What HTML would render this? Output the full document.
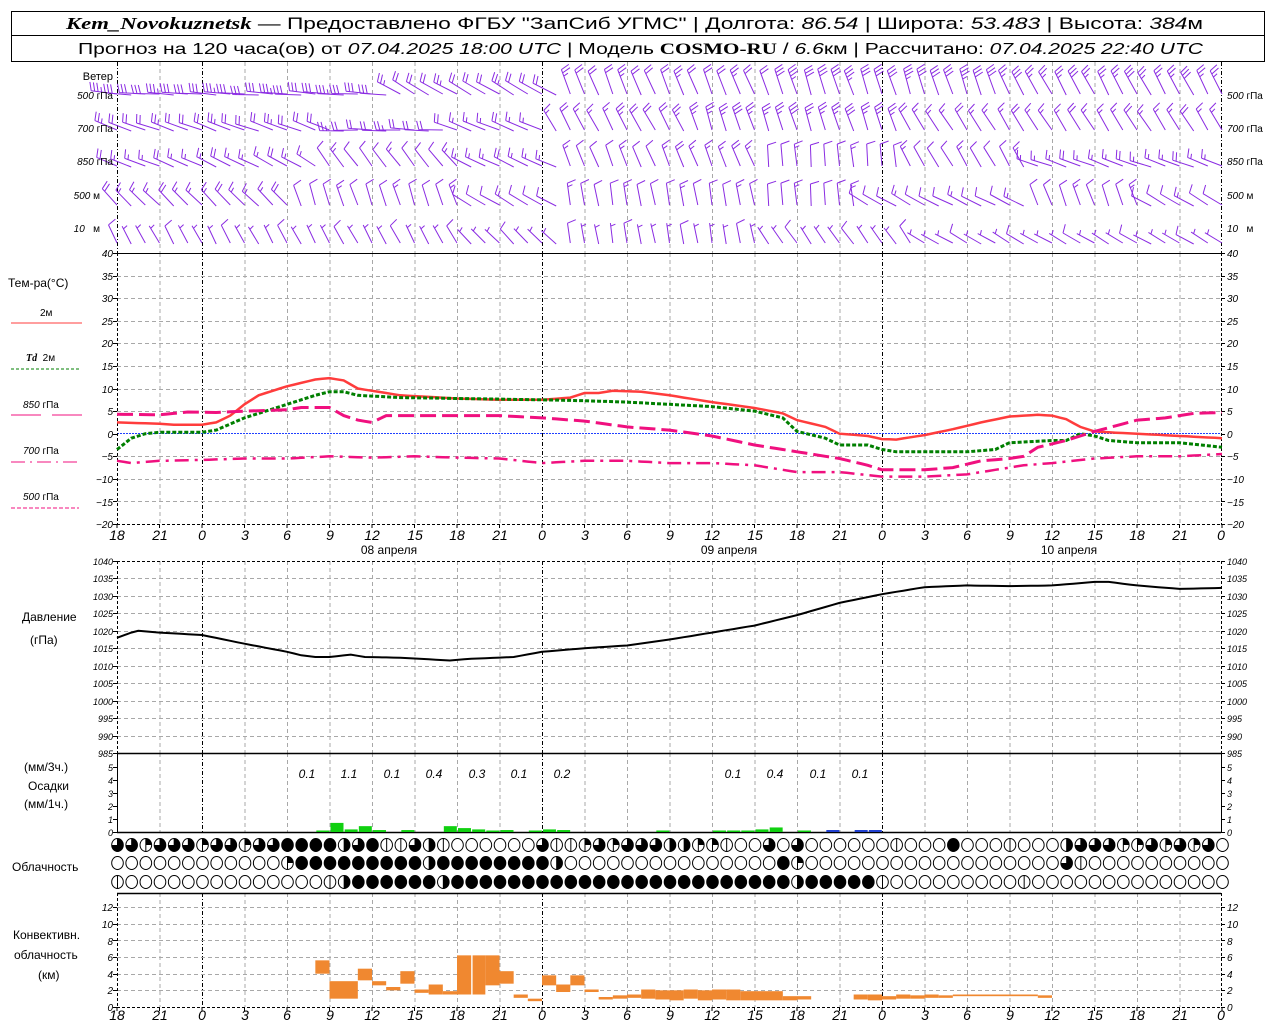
<!DOCTYPE html>
<html><head><meta charset="utf-8"><style>
html,body{margin:0;padding:0;background:#fff;width:1280px;height:1024px;overflow:hidden}
svg{display:block}
text{font-family:"Liberation Sans",sans-serif;fill:#000}
.tk{font-size:10px;font-style:italic}
.hx{font-size:14px;font-style:italic;text-anchor:middle}
.lb{font-size:11px}
</style></head><body>
<svg id="s" width="1280" height="1024" viewBox="0 0 1280 1024" xmlns="http://www.w3.org/2000/svg">
<rect x="11.5" y="11.5" width="1253" height="50" fill="none" stroke="#000"/>
<line x1="11" y1="35.5" x2="1265" y2="35.5" stroke="#000"/>
<text x="66" y="29" textLength="1137" lengthAdjust="spacingAndGlyphs" style="font-size:17px"><tspan style="font-family:'Liberation Serif',serif;font-style:italic;font-weight:bold">Kem_Novokuznetsk</tspan> — Предоставлено ФГБУ "ЗапСиб УГМС" | Долгота: <tspan font-style="italic">86.54</tspan> | Широта: <tspan font-style="italic">53.483</tspan> | Высота: <tspan font-style="italic">384</tspan>м</text>
<text x="78" y="54" textLength="1125" lengthAdjust="spacingAndGlyphs" style="font-size:16px">Прогноз на 120 часа(ов) от <tspan font-style="italic">07.04.2025 18:00 UTC</tspan> | Модель <tspan style="font-family:'Liberation Serif',serif;font-weight:bold">COSMO-RU</tspan> / <tspan font-style="italic">6.6</tspan>км | Рассчитано: <tspan font-style="italic">07.04.2025 22:40 UTC</tspan></text>

<g id="grid"></g>
<g id="data"></g>

<text class="lb" x="113" y="80" text-anchor="end">Ветер</text>
<g class="tk" style="font-size:10px">
<text x="113" y="99" text-anchor="end"><tspan font-style="italic">500</tspan> <tspan font-style="normal">гПа</tspan></text>
<text x="113" y="132" text-anchor="end">700 <tspan font-style="normal">гПа</tspan></text>
<text x="113" y="165" text-anchor="end">850 <tspan font-style="normal">гПа</tspan></text>
<text x="100" y="199" text-anchor="end">500 <tspan font-style="normal">м</tspan></text>
<text x="100" y="232" text-anchor="end">10 &#160; <tspan font-style="normal">м</tspan></text>
<text x="1227" y="99">500 <tspan font-style="normal">гПа</tspan></text>
<text x="1227" y="132">700 <tspan font-style="normal">гПа</tspan></text>
<text x="1227" y="165">850 <tspan font-style="normal">гПа</tspan></text>
<text x="1227" y="199">500 <tspan font-style="normal">м</tspan></text>
<text x="1227" y="232">10 &#160; <tspan font-style="normal">м</tspan></text>
</g>

<text class="lb" x="8" y="287" style="font-size:12px">Тем-ра(°С)</text>
<text class="lb" x="40" y="316" style="font-size:10px">2м</text>
<line x1="11" y1="323" x2="82" y2="323" stroke="#ff3c3c"/>
<text class="lb" x="26" y="361" style="font-size:10px"><tspan font-style="italic" font-weight="bold" font-family="Liberation Serif">Td</tspan> &#160;2м</text>
<line x1="11" y1="369" x2="79" y2="369" stroke="#007f00" stroke-dasharray="3,2"/>
<text class="lb" x="23" y="408" style="font-size:10px"><tspan font-style="italic">850</tspan> гПа</text>
<line x1="11" y1="415" x2="41" y2="415" stroke="#f0107f"/><line x1="52" y1="415" x2="82" y2="415" stroke="#f0107f"/>
<text class="lb" x="23" y="454" style="font-size:10px"><tspan font-style="italic">700</tspan> гПа</text>
<line x1="11" y1="462" x2="82" y2="462" stroke="#f0107f" stroke-dasharray="14,5,2,5"/>
<text class="lb" x="23" y="500" style="font-size:10px"><tspan font-style="italic">500</tspan> гПа</text>
<line x1="11" y1="508" x2="79" y2="508" stroke="#f0107f" stroke-dasharray="4,2"/>

<g class="tk" text-anchor="end">
<text x="113" y="257">40</text><text x="113" y="280">35</text><text x="113" y="302">30</text><text x="113" y="325">25</text><text x="113" y="347">20</text><text x="113" y="370">15</text><text x="113" y="393">10</text><text x="113" y="415">5</text><text x="113" y="438">0</text><text x="113" y="460">−5</text><text x="113" y="483">−10</text><text x="113" y="506">−15</text><text x="113" y="528">−20</text>
</g>
<g class="tk">
<text x="1227" y="257">40</text><text x="1227" y="280">35</text><text x="1227" y="302">30</text><text x="1227" y="325">25</text><text x="1227" y="347">20</text><text x="1227" y="370">15</text><text x="1227" y="393">10</text><text x="1227" y="415">5</text><text x="1227" y="438">0</text><text x="1227" y="460">−5</text><text x="1227" y="483">−10</text><text x="1227" y="506">−15</text><text x="1227" y="528">−20</text>
</g>
<g class="hx">
<text x="117" y="540">18</text><text x="160" y="540">21</text><text x="202" y="540">0</text><text x="245" y="540">3</text><text x="287" y="540">6</text><text x="330" y="540">9</text><text x="372" y="540">12</text><text x="415" y="540">15</text><text x="457" y="540">18</text><text x="500" y="540">21</text><text x="542" y="540">0</text><text x="585" y="540">3</text><text x="627" y="540">6</text><text x="670" y="540">9</text><text x="712" y="540">12</text><text x="755" y="540">15</text><text x="797" y="540">18</text><text x="840" y="540">21</text><text x="882" y="540">0</text><text x="925" y="540">3</text><text x="967" y="540">6</text><text x="1010" y="540">9</text><text x="1052" y="540">12</text><text x="1095" y="540">15</text><text x="1137" y="540">18</text><text x="1180" y="540">21</text><text x="1221" y="540">0</text>
</g>
<g class="lb" text-anchor="middle" style="font-size:12px">
<text x="389" y="554">08 апреля</text><text x="729" y="554">09 апреля</text><text x="1069" y="554">10 апреля</text>
</g>

<text class="lb" x="22" y="621" style="font-size:12px">Давление</text>
<text class="lb" x="30" y="644" style="font-size:12px">(гПа)</text>
<g class="tk" text-anchor="end" style="font-size:9px">
<text x="113" y="565">1040</text><text x="113" y="582">1035</text><text x="113" y="600">1030</text><text x="113" y="617">1025</text><text x="113" y="635">1020</text><text x="113" y="652">1015</text><text x="113" y="670">1010</text><text x="113" y="687">1005</text><text x="113" y="705">1000</text><text x="113" y="722">995</text><text x="113" y="740">990</text><text x="113" y="757">985</text>
</g>
<g class="tk" style="font-size:9px">
<text x="1227" y="565">1040</text><text x="1227" y="582">1035</text><text x="1227" y="600">1030</text><text x="1227" y="617">1025</text><text x="1227" y="635">1020</text><text x="1227" y="652">1015</text><text x="1227" y="670">1010</text><text x="1227" y="687">1005</text><text x="1227" y="705">1000</text><text x="1227" y="722">995</text><text x="1227" y="740">990</text><text x="1227" y="757">985</text>
</g>

<text class="lb" x="24" y="771" style="font-size:12px">(мм/3ч.)</text>
<text class="lb" x="28" y="790" style="font-size:12px">Осадки</text>
<text class="lb" x="24" y="808" style="font-size:12px">(мм/1ч.)</text>
<g class="tk" text-anchor="end" style="font-size:9px">
<text x="113" y="771">5</text><text x="113" y="784">4</text><text x="113" y="797">3</text><text x="113" y="810">2</text><text x="113" y="823">1</text><text x="113" y="836">0</text>
</g>
<g class="tk" style="font-size:9px">
<text x="1227" y="771">5</text><text x="1227" y="784">4</text><text x="1227" y="797">3</text><text x="1227" y="810">2</text><text x="1227" y="823">1</text><text x="1227" y="836">0</text>
</g>
<g class="tk" text-anchor="middle" style="font-size:12px">
<text x="307" y="778">0.1</text><text x="349" y="778">1.1</text><text x="392" y="778">0.1</text><text x="434" y="778">0.4</text><text x="477" y="778">0.3</text><text x="519" y="778">0.1</text><text x="562" y="778">0.2</text><text x="733" y="778">0.1</text><text x="775" y="778">0.4</text><text x="818" y="778">0.1</text><text x="860" y="778">0.1</text>
</g>
<text class="lb" x="12" y="871" style="font-size:12px">Облачность</text>

<text class="lb" x="13" y="939" style="font-size:12px">Конвективн.</text>
<text class="lb" x="14" y="959" style="font-size:12px">облачность</text>
<text class="lb" x="38" y="979" style="font-size:12px">(км)</text>
<g class="tk" text-anchor="end">
<text x="113" y="911">12</text><text x="113" y="928">10</text><text x="113" y="945">8</text><text x="113" y="961">6</text><text x="113" y="978">4</text><text x="113" y="994">2</text><text x="113" y="1011">0</text>
</g>
<g class="tk">
<text x="1227" y="911">12</text><text x="1227" y="928">10</text><text x="1227" y="945">8</text><text x="1227" y="961">6</text><text x="1227" y="978">4</text><text x="1227" y="994">2</text><text x="1227" y="1011">0</text>
</g>
<g class="hx">
<text x="117" y="1020">18</text><text x="160" y="1020">21</text><text x="202" y="1020">0</text><text x="245" y="1020">3</text><text x="287" y="1020">6</text><text x="330" y="1020">9</text><text x="372" y="1020">12</text><text x="415" y="1020">15</text><text x="457" y="1020">18</text><text x="500" y="1020">21</text><text x="542" y="1020">0</text><text x="585" y="1020">3</text><text x="627" y="1020">6</text><text x="670" y="1020">9</text><text x="712" y="1020">12</text><text x="755" y="1020">15</text><text x="797" y="1020">18</text><text x="840" y="1020">21</text><text x="882" y="1020">0</text><text x="925" y="1020">3</text><text x="967" y="1020">6</text><text x="1010" y="1020">9</text><text x="1052" y="1020">12</text><text x="1095" y="1020">15</text><text x="1137" y="1020">18</text><text x="1180" y="1020">21</text><text x="1221" y="1020">0</text>
</g>
</svg>
<script>
(function(){
var NS="http://www.w3.org/2000/svg";
var G=document.getElementById("grid"),D=document.getElementById("data");
function el(p,t,a){var e=document.createElementNS(NS,t);for(var k in a)e.setAttribute(k,a[k]);p.appendChild(e);return e;}
function X(h){return 117+h*340/24;}
function L(p,x1,y1,x2,y2,s,w,da){var a={x1:x1,y1:y1,x2:x2,y2:y2,stroke:s,"stroke-width":w||1};if(da)a["stroke-dasharray"]=da;return el(p,"line",a);}
var panels=[[62,253],[253,524],[561,753],[753,832],[893,1007]];
for(var h=3;h<78;h+=3){var mid=(h==6||h==30||h==54);
 panels.forEach(function(pn){L(G,X(h)+.5,pn[0],X(h)+.5,pn[1],mid?"#000":"#a8a8a8",1,mid?"4,2,1,2":"4,3");});}
function Yt(t){return 433.7-t*4.517;}
for(var t=-15;t<=35;t+=5){if(t==0)continue;L(G,117,Math.round(Yt(t))+.5,1221,Math.round(Yt(t))+.5,"#a8a8a8",1,"4,3");}
function Yp(p){return 561+(1040-p)*3.491;}
for(var p=990;p<=1035;p+=5)L(G,117,Math.round(Yp(p))+.5,1221,Math.round(Yp(p))+.5,"#a8a8a8",1,"4,3");
L(G,117,561.5,1221,561.5,"#000",1,"3,2");
function Yc(k){return 1007-k*8.33;}
for(var k=2;k<=12;k+=2)L(G,117,Math.round(Yc(k))+.5,1221,Math.round(Yc(k))+.5,"#a8a8a8",1,"4,3");
L(G,117,1007.5,1221,1007.5,"#000",1,"3,2");
L(G,117,253.5,1221,253.5,"#000",1);L(G,117,524.5,1221,524.5,"#000",1,"3,2");
L(G,117,753.5,1221,753.5,"#000",1.5);L(G,117,832.5,1221,832.5,"#000",1.5);L(G,117,893.5,1221,893.5,"#000",1.5);
L(G,117,433.5,1221,433.5,"#2040ff",1,"2,1");
[[62,253,"4,2,1,2"],[253,524,"3,2"],[561,753,"3,2"],[753,832,null],[893,1007,"3,2"]].forEach(function(a){L(G,117.5,a[0],117.5,a[1],"#000",1,a[2]);L(G,1221.5,a[0],1221.5,a[1],"#000",1,a[2]);});
for(var t=-20;t<=40;t+=5){var y=Math.round(Yt(t))+.5;L(G,113,y,117,y,"#000");L(G,1221,y,1225,y,"#000");}
for(var p=985;p<=1040;p+=5){var y=Math.round(Yp(p))+.5;L(G,113,y,117,y,"#000");L(G,1221,y,1225,y,"#000");}
for(var m=0;m<=5;m++){var y=832.5-m*13;L(G,113,y,117,y,"#000");L(G,1221,y,1225,y,"#000");}
for(var k=0;k<=12;k+=2){var y=Math.round(Yc(k))+.5;L(G,113,y,117,y,"#000");L(G,1221,y,1225,y,"#000");}
for(var h=0;h<=78;h+=3){L(G,X(h),524,X(h),528,"#000");L(G,X(h),1007,X(h),1011,"#000");}

function interp(pts,h){for(var i=0;i<pts.length-1;i++){if(h>=pts[i][0]&&h<=pts[i+1][0]){var f=(h-pts[i][0])/(pts[i+1][0]-pts[i][0]);return pts[i][1]+f*(pts[i+1][1]-pts[i][1]);}}return pts[pts.length-1][1];}
function curve(pts,yf,attrs,step){var s="";for(var h=0;h<=78.001;h+=step||0.5){s+=(s?" L":"M")+X(h).toFixed(1)+","+yf(interp(pts,h)).toFixed(1);}attrs.d=s;attrs.fill="none";el(D,"path",attrs);}

var T2=[[0,2.5],[3,2.2],[4,2],[6,2],[7,2.5],[8,4],[9,6.5],[10,8.5],[12,10.5],[14,12],[15,12.3],[16,11.8],[17,10],[18,9.5],[20,8.5],[24,7.8],[27,7.5],[30,7.5],[32,8],[33,9],[34,9],[35,9.5],[37,9.3],[39,8.5],[42,7],[45,5.7],[47,4.5],[48,3],[50,1.5],[51,0],[53,-0.5],[54,-1.2],[55,-1.3],[57,-0.3],[59,1],[61,2.5],[63,3.8],[65,4.2],[66,4],[67,3.2],[68,1.5],[69,0.5],[70,0.3],[72,0],[75,-0.5],[78,-1]];
var TD=[[0,-3.5],[1,-1],[2,0],[3,0.3],[6,0.3],[7,0.8],[9,3.5],[12,6.5],[14,8.5],[15,9.3],[16,9.3],[17,8.5],[20,8],[24,7.8],[30,7.5],[33,7.3],[36,7],[39,6.5],[42,6],[45,5],[47,3.5],[48,0.5],[50,-1],[51,-2.5],[53,-2.5],[54,-3.5],[55,-4],[58,-4],[60,-4],[62,-3.5],[63,-2],[66,-1.5],[67,-1.5],[68,0],[69,-0.5],[70,-1.5],[72,-2],[75,-2],[78,-3]];
var P85=[[0,4.3],[3,4.2],[5,4.8],[7,4.7],[9,5],[12,5.3],[13,5.8],[15,5.8],[16,4],[17,3],[18,2.5],[19,4],[24,4],[27,4],[30,3.5],[33,2.8],[36,1.5],[39,0.8],[42,-0.5],[45,-2.5],[48,-4],[51,-5.5],[53,-7],[54,-8],[57,-8],[59,-7.5],[61,-6],[63,-5.5],[64,-5],[65,-3],[67,-1.5],[68,-0.5],[69,0.5],[72,3],[74,3.5],[76,4.5],[78,4.7]];
var P70=[[0,-6],[1,-6.5],[3,-6],[6,-5.8],[9,-5.5],[12,-5.5],[15,-5],[18,-5.3],[21,-5],[24,-5.3],[27,-5.5],[30,-6.5],[33,-6],[36,-6],[39,-6.5],[42,-6.5],[45,-7],[48,-8.5],[51,-8.5],[54,-9.5],[57,-9.5],[60,-9],[62,-8],[64,-7],[66,-6.5],[69,-5.5],[72,-5],[75,-5],[78,-4.5]];
curve(T2,Yt,{stroke:"#ff3c3c","stroke-width":2.5});
curve(TD,Yt,{stroke:"#007f00","stroke-width":3,"stroke-dasharray":"4,2"});
curve(P85,Yt,{stroke:"#f0107f","stroke-width":3,"stroke-dasharray":"16,6"});
curve(P70,Yt,{stroke:"#f0107f","stroke-width":2.5,"stroke-dasharray":"14,6,3,6"});

var PR=[[0,1018],[1,1019.5],[1.5,1020],[3,1019.5],[6,1018.8],[9,1016.3],[12,1014],[13,1013],[14,1012.5],[15,1012.5],[16.5,1013.2],[17.5,1012.5],[20,1012.3],[23.5,1011.5],[25,1012],[28,1012.5],[30,1014],[33,1015],[36,1015.8],[39,1017.5],[42,1019.5],[45,1021.5],[48,1024.5],[51,1028],[54,1030.5],[57,1032.5],[60,1033],[63,1032.8],[66,1033],[69,1034],[70,1034],[72,1033],[75,1032],[78,1032.3]];
curve(PR,Yp,{stroke:"#000","stroke-width":2});

var PRC=[[14,0.05],[15,0.7],[16,0.2],[17,0.45],[18,0.15],[20,0.15],[23,0.45],[24,0.3],[25,0.2],[26,0.05],[27,0.15],[29,0.05],[30,0.2],[31,0.15],[38,0.05],[42,0.05],[43,0.1],[44,0.1],[45,0.2],[46,0.35],[48,0.05]];
PRC.forEach(function(b){var hh=Math.max(1.5,b[1]*13);el(D,"rect",{x:X(b[0])+1,y:832-hh,width:13,height:hh,fill:"#10d010"});});
[50,52,53].forEach(function(h){el(D,"rect",{x:X(h)+1,y:830,width:13,height:2,fill:"#2040d0"});});

var CV=[[14,15,4,5.6],[15,17,1,3.1],[17,18,3.2,4.6],[18,19,2.6,3.1],[19,20,2,2.4],[20,21,2.8,4.3],[21,22,1.7,2.1],[22,23,1.5,2.7],[23,24,1.5,1.9],[24,25,1.5,6.2],[25.1,26,1.5,6.2],[26,27,2.6,6.2],[27,28,2.8,4.3],[28,29,1.1,1.5],[29,30,0.7,1],[30,31,2.6,3.8],[31,32,1.8,2.7],[32,33,2.6,3.8],[33,34,1.8,2.1],[34,35,0.9,1.2],[35,36,1,1.4],[36,37,1.1,1.5],[37,38,1,2.1],[38,39,0.9,2],[39,40,0.8,2],[40,41,1,2.1],[41,42,0.8,2],[42,43,0.9,2.1],[43,44,0.8,2.1],[44,47,0.8,1.9],[47,48,0.8,1.3],[48,49,0.9,1.3],[52,53,0.9,1.5],[53,54,0.8,1.5],[54,55,0.9,1.3],[55,56,1,1.5],[56,57,1,1.4],[57,58,1.1,1.5],[58,59,1.1,1.4],[59,65,1.3,1.5],[65,66,1.1,1.4]];
CV.forEach(function(b){el(D,"rect",{x:X(b[0]),y:Yc(b[3]),width:X(b[1])-X(b[0]),height:Yc(b[2])-Yc(b[3]),fill:"#f08830"});});

var rows=[
"ttqtttqttqttffffhtfllthlooooootllq"+"tqttthhqqlootot"+"oooooolooo"+"f"+"oool"+"ooo"+"htttqqtqtqtoo",
"oooooooooooo"+"q"+"fffffffffhffffffff"+"h"+"ooooooooooooooo"+"fq"+"oooooooooooooooooo"+"tl"+"oooooooooo",
"l"+"oooooooooooooo"+"lh"+"ffffffhffffffffffffffffffffffffhfffff"+"l"+"oooooooooloooooooooooooooo"];
var rys=[845,863,882];
rows.forEach(function(r,ri){for(var h=0;h<=78;h++){var c=r.charAt(h)||"o",cx=X(h)+.5,cy=rys[ri],rx=5.8,ry=6.5;
 el(D,"ellipse",{cx:cx,cy:cy,rx:rx,ry:ry,fill:c=="f"?"#000":"#fff",stroke:"#000","stroke-width":1});
 if(c=="h")el(D,"path",{d:"M"+cx+","+(cy-ry)+" A"+rx+","+ry+" 0 0 1 "+cx+","+(cy+ry)+"Z",fill:"#000"});
 if(c=="q")el(D,"path",{d:"M"+cx+","+cy+" L"+cx+","+(cy-ry)+" A"+rx+","+ry+" 0 0 1 "+(cx+rx)+","+cy+"Z",fill:"#000"});
 if(c=="t")el(D,"path",{d:"M"+cx+","+cy+" L"+cx+","+(cy-ry)+" A"+rx+","+ry+" 0 1 1 "+(cx-rx)+","+cy+"Z",fill:"#000"});
 if(c=="l"||c=="q"||c=="t"||c=="h")L(D,cx,cy-ry,cx,cy+ry,"#000",1);
}});

var PUR="#8a2be2";
function barb(x,y,a,n,len){var r=a*Math.PI/180,dx=Math.cos(r),dy=-Math.sin(r);var tx=x+dx*len,ty=y+dy*len;
 var s="M"+x.toFixed(1)+","+y.toFixed(1)+" L"+tx.toFixed(1)+","+ty.toFixed(1);
 var fr=(75)*Math.PI/180,fx=dx*Math.cos(fr)-dy*Math.sin(fr),fy=dx*Math.sin(fr)+dy*Math.cos(fr);
 var full=Math.floor(n/2),half=n%2,pos=0;
 for(var i=0;i<full;i++){var px=tx-dx*pos,py=ty-dy*pos;s+=" M"+px.toFixed(1)+","+py.toFixed(1)+" l"+(fx*9).toFixed(1)+","+(fy*9).toFixed(1);pos+=3.5;}
 if(half){if(full==0)pos=3;var px=tx-dx*pos,py=ty-dy*pos;s+=" M"+px.toFixed(1)+","+py.toFixed(1)+" l"+(fx*5).toFixed(1)+","+(fy*5).toFixed(1);}
 el(D,"path",{d:s,stroke:PUR,"stroke-width":1,fill:"none"});}
var lev=[
 {y:94,len:26,s:[[0,176,6],[19,176,6],[20,150,4],[31,150,4],[32,112,4],[46,112,4],[47,108,6],[62,108,6],[63,118,5],[78,118,5]]},
 {y:130,len:24,s:[[0,160,4],[15,160,4],[16,178,4],[23,178,4],[24,158,3],[30,158,3],[31,118,3],[40,118,4],[41,108,5],[55,108,5],[56,122,3],[78,122,3]]},
 {y:166,len:22,s:[[0,160,3],[14,150,3],[15,125,2],[24,130,2],[25,155,3],[31,155,3],[32,112,2],[45,112,3],[46,95,2],[55,95,2],[56,120,2],[64,120,2],[65,160,3],[78,160,3]]},
 {y:205,len:22,s:[[0,135,3],[12,135,3],[13,108,2],[24,108,2],[25,150,2],[31,150,2],[32,100,2],[45,100,2],[46,95,2],[52,95,2],[53,150,2],[64,155,2],[65,110,2],[72,110,2],[73,150,2],[78,150,2]]},
 {y:243,len:20,s:[[0,118,1],[24,118,1],[25,135,1],[31,135,1],[32,100,1],[45,100,1],[46,125,1],[56,125,1],[57,150,1],[78,150,1]]}];
lev.forEach(function(lv){for(var h=0;h<=78;h++){var a=interp(lv.s.map(function(q){return [q[0],q[1]];}),h);
 var n=Math.round(interp(lv.s.map(function(q){return [q[0],q[2]];}),h));
 var j=((h*37)%7)-3; barb(X(h),lv.y+(h%3==1?1:0),a+j,n+((h%4==0)?1:0),lv.len);}});
})();
</script>
</body></html>
